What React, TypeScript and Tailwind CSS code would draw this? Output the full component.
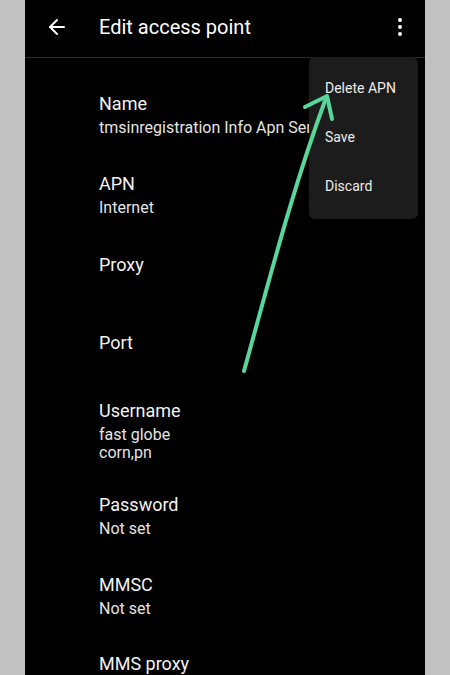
import { ArrowLeft } from 'lucide-react';

interface ApnField {
  label: string;
  values: string[];
  /** space above the label, px */
  gap: string;
  /** keeps an empty summary line under the label */
  emptySummary?: boolean;
}

const fields: ApnField[] = [
  { label: 'Name', values: ['tmsinregistration Info Apn Ser'], gap: 'mt-[34px]' },
  { label: 'APN', values: ['Internet'], gap: 'mt-[35px]' },
  { label: 'Proxy', values: [], gap: 'mt-[36px]', emptySummary: true },
  { label: 'Port', values: [], gap: 'mt-[33px]' },
  { label: 'Username', values: ['fast globe', 'corn,pn'], gap: 'mt-[44px]' },
  { label: 'Password', values: ['Not set'], gap: 'mt-[31px]' },
  { label: 'MMSC', values: ['Not set'], gap: 'mt-[35px]' },
  { label: 'MMS proxy', values: [], gap: 'mt-[34px]' },
];

const menuItems = ['Delete APN', 'Save', 'Discard'];

function FieldRow({ field }: { field: ApnField }) {
  return (
    <div className={`${field.gap} pl-[74px] pr-4`}>
      <p className="text-[18px] leading-[24px] text-[#f2f2f2] whitespace-nowrap">{field.label}</p>
      {field.values.length > 0 && (
        <div className="mt-[3px]">
          {field.values.map((v) => (
            <p key={v} className="text-[16px] leading-[18px] text-[#e4e4e4] whitespace-nowrap">
              {v}
            </p>
          ))}
        </div>
      )}
      {field.emptySummary && <div className="mt-[3px] h-[18px]" />}
    </div>
  );
}

export default function App() {
  return (
    <div className="flex h-[675px] w-[450px] bg-[#c1c1c1] px-[25px] font-['Roboto',sans-serif]">
      <div className="relative h-full w-[400px] overflow-hidden bg-black">
        {/* top bar */}
        <header className="flex h-[58px] items-center border-b border-[#2c2c2c] pb-[3px]">
          <div className="ml-[20px] flex w-[54px] items-center">
            <ArrowLeft size={24} strokeWidth={2} className="text-white" />
          </div>
          <h1 className="text-[20px] leading-[26px] text-white">Edit access point</h1>
          <div className="ml-auto mr-[23px] flex flex-col items-center gap-[3px]">
            <span className="h-[4px] w-[4px] rounded-full bg-white" />
            <span className="h-[4px] w-[4px] rounded-full bg-white" />
            <span className="h-[4px] w-[4px] rounded-full bg-white" />
          </div>
        </header>

        <div className="flex flex-col">
          {fields.map((f) => (
            <FieldRow key={f.label} field={f} />
          ))}
        </div>

        {/* overflow menu */}
        <div className="absolute left-[284px] top-[57px] w-[109px] rounded-md bg-[#1c1c1c] pt-[7px] pb-[8px]">
          {menuItems.map((item) => (
            <div key={item} className="flex h-[49px] items-center pl-[16px] text-[14px] text-[#ececec]">
              {item}
            </div>
          ))}
        </div>

        {/* annotation arrow */}
        <svg className="pointer-events-none absolute left-0 top-0" width="400" height="675" viewBox="25 0 400 675">
          <path
            d="M244 371 C268 285 292 190 326 98"
            fill="none"
            stroke="#58d69b"
            strokeWidth="4"
            strokeLinecap="round"
          />
          <path
            d="M305 107 L327 96 L332 119"
            fill="none"
            stroke="#58d69b"
            strokeWidth="4"
            strokeLinecap="round"
            strokeLinejoin="round"
          />
        </svg>
      </div>
    </div>
  );
}
